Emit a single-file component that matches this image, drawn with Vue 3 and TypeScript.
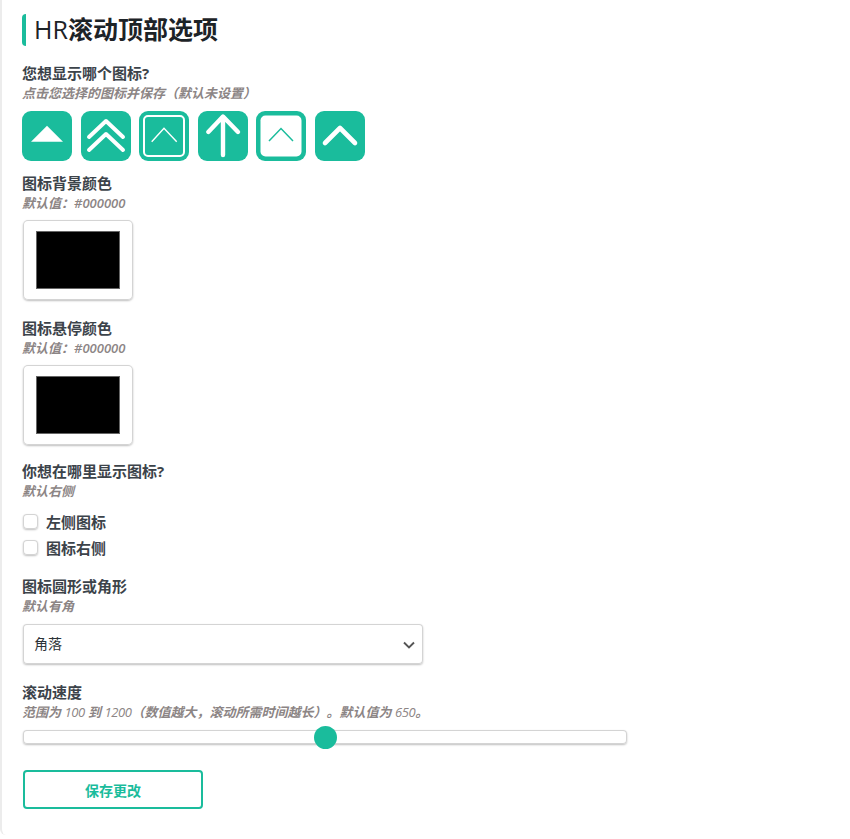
<script setup lang="ts">
const swatches = [
  { label: '图标背景颜色', cls: 'lbl-a' },
  { label: '图标悬停颜色', cls: 'lbl-b' },
]
</script>

<template>
  <div class="page">
    <form class="card" @submit.prevent>
      <h2 class="title"><span class="latin">HR</span>滚动顶部选项</h2>

      <label class="lbl lbl-first">您想显示哪个图标?</label>
      <p class="hint">点击您选择的图标并保存（默认未设置）</p>
      <div class="icons">
        <svg class="ic" viewBox="0 0 50 50"><rect width="50" height="50" rx="9" fill="#1abc9c"/><path d="M9 30.7L25 14.7L41 30.7Z" fill="#fff"/></svg>
        <svg class="ic" viewBox="0 0 50 50"><rect width="50" height="50" rx="9" fill="#1abc9c"/><path d="M8 26L25 10L42 26M8 39L25 23L42 39" fill="none" stroke="#fff" stroke-width="4" stroke-linecap="round" stroke-linejoin="round"/></svg>
        <svg class="ic" viewBox="0 0 50 50"><rect width="50" height="50" rx="9" fill="#1abc9c"/><rect x="5" y="5" width="40" height="40" rx="4" fill="none" stroke="#fff" stroke-width="2"/><path d="M12.7 30.7L25 17.3L37.7 30.7" fill="none" stroke="#fff" stroke-width="1.4"/></svg>
        <svg class="ic" viewBox="0 0 50 50"><rect width="50" height="50" rx="9" fill="#1abc9c"/><path d="M10.3 21L25 5.5L40 21M25 6V44" fill="none" stroke="#fff" stroke-width="4.4" stroke-linecap="round" stroke-linejoin="round"/></svg>
        <svg class="ic" viewBox="0 0 50 50"><rect width="50" height="50" rx="9" fill="#1abc9c"/><rect x="4.5" y="4.5" width="41" height="41" rx="5" fill="#fff"/><path d="M13 30L25 17.5L37 30" fill="none" stroke="#1abc9c" stroke-width="1.5"/></svg>
        <svg class="ic" viewBox="0 0 50 50"><rect width="50" height="50" rx="9" fill="#1abc9c"/><path d="M10 32L25 17L40 32" fill="none" stroke="#fff" stroke-width="4.6" stroke-linecap="round" stroke-linejoin="round"/></svg>
      </div>

      <template v-for="s in swatches" :key="s.label">
        <label class="lbl" :class="s.cls">{{ s.label }}</label>
        <p class="hint">默认值：<span class="hex">#000000</span></p>
        <div class="swatch-box"><span class="swatch"></span></div>
      </template>

      <label class="lbl lbl-c">你想在哪里显示图标?</label>
      <p class="hint">默认右侧</p>
      <div class="checks">
        <div class="check"><span class="box"></span><span>左侧图标</span></div>
        <div class="check"><span class="box"></span><span>图标右侧</span></div>
      </div>

      <label class="lbl lbl-d">图标圆形或角形</label>
      <p class="hint">默认有角</p>
      <div class="select">
        <span>角落</span>
        <svg class="chev" viewBox="0 0 12 8"><path d="M1 1.5L6 6.5L11 1.5" fill="none" stroke="#555" stroke-width="1.9"/></svg>
      </div>

      <label class="lbl lbl-e">滚动速度</label>
      <p class="hint">范围为 <span class="num">100</span> 到 <span class="num">1200</span>（数值越大，滚动所需时间越长）。默认值为 <span class="num">650</span>。</p>
      <div class="range"><span class="thumb"></span></div>

      <button class="save" type="button">保存更改</button>
    </form>
  </div>
</template>

<style scoped>
.page {
  height: 839px;
  background: #fff;
  overflow: hidden;
  font-family: "Open Sans", "Noto Sans CJK SC", sans-serif;
  text-spacing-trim: space-all;
}
.card {
  height: 835px;
  box-sizing: border-box;
  background: #fff;
  border-left: 2px solid #ececec;
  border-radius: 0 0 0 6px;
  padding: 14px 20px 0;
  display: flex;
  flex-direction: column;
  align-items: flex-start;
}
.title {
  margin: 0;
  height: 32px;
  line-height: 31px;
  box-sizing: border-box;
  border-left: 4px solid #1abc9c;
  border-radius: 4px;
  padding-left: 8px;
  font-size: 25px;
  font-weight: 700;
  color: #1d2327;
}
.latin { font-weight: 500; }
.lbl {
  display: block;
  font-size: 15px;
  font-weight: 700;
  line-height: 21px;
  color: #3c434a;
}
.lbl-first { margin-top: 17px; }
.lbl-a { margin-top: 12px; }
.lbl-b { margin-top: 18px; }
.lbl-c { margin-top: 16px; }
.lbl-d { margin-top: 18px; }
.lbl-e { margin-top: 18px; }
.hint {
  margin: 0;
  font-size: 13px;
  line-height: 18px;
  font-style: italic;
  font-weight: 700;
  color: #8c8585;
}
.num { font-weight: 400; letter-spacing: -0.4px; }
.hex { font-weight: 600; }
.icons {
  display: flex;
  gap: 8.6px;
  margin-top: 9px;
}
.ic { width: 50px; height: 50px; display: block; flex: none; }
.swatch-box {
  margin: 8px 0 0 1px;
  width: 110px;
  height: 80px;
  box-sizing: border-box;
  background: #fff;
  border-radius: 5px;
  box-shadow: inset 0 0 0 1px #d4d4d4, 0 1px 2px rgba(0,0,0,.25);
  display: flex;
  align-items: center;
  justify-content: center;
}
.swatch {
  width: 84px;
  height: 58px;
  box-sizing: border-box;
  background: #000;
  border: 1px solid #666;
}
.checks { margin-top: 12px; display: flex; flex-direction: column; gap: 6px; }
.check {
  display: flex;
  align-items: center;
  gap: 8px;
  padding-left: 1px;
  font-size: 15px;
  font-weight: 700;
  line-height: 20px;
  color: #3c434a;
}
.box {
  width: 15px;
  height: 15px;
  border-radius: 4px;
  background: #fff;
  box-shadow: inset 0 0 0 1px #d4d4d4, 0 1px 2px rgba(0,0,0,.25);
  margin-bottom: 2px;
}
.select {
  margin: 9px 0 0 1px;
  width: 400px;
  height: 40px;
  box-sizing: border-box;
  padding: 0 8px 0 11px;
  background: #fff;
  border-radius: 4px;
  box-shadow: inset 0 0 0 1px #d4d4d4, 0 1px 2px rgba(0,0,0,.25);
  display: flex;
  align-items: center;
  justify-content: space-between;
  font-size: 14px;
  color: #2c3338;
}
.select > span { margin-top: -2px; }
.chev { width: 12px; height: 8px; margin-top: 2px; }
.range {
  position: relative;
  margin: 9px 0 0 1px;
  width: 604px;
  height: 14px;
  background: #fff;
  border-radius: 4px;
  box-shadow: inset 0 0 0 1px #d4d4d4, 0 1px 2px rgba(0,0,0,.25);
}
.thumb {
  position: absolute;
  left: 291px;
  top: -4px;
  width: 23px;
  height: 23px;
  border-radius: 50%;
  background: #1abc9c;
}
.save {
  margin: 26px 0 0 1px;
  width: 180px;
  height: 39px;
  background: #fff;
  border: 2px solid #1abc9c;
  border-radius: 4px;
  color: #1abc9c;
  font-family: inherit;
  font-size: 14px;
  font-weight: 700;
}
</style>
